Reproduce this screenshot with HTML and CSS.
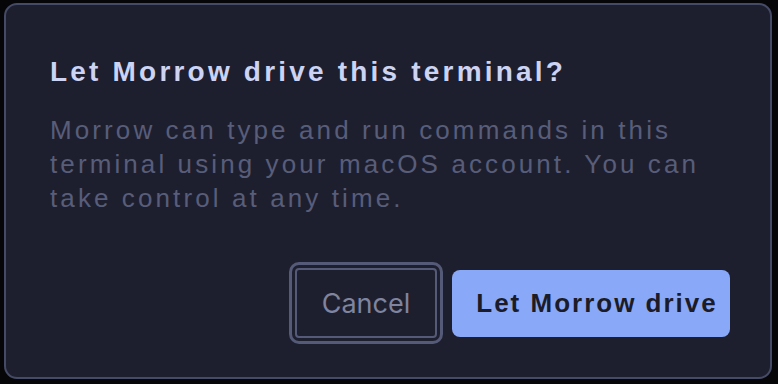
FILE: index.html
```html
<!DOCTYPE html>
<html>
<head>
<meta charset="utf-8">
<link rel="stylesheet" href="styles.css">
</head>
<body>
<div class="dialog">
  <h1 class="title">Let Morrow drive this terminal?</h1>
  <p class="message">Morrow can type and run commands in this<br>terminal using your macOS account. You can<br>take control at any time.</p>
  <div class="actions">
    <button class="btn btn-cancel">Cancel</button>
    <button class="btn btn-primary">Let Morrow drive</button>
  </div>
</div>
</body>
</html>
```
FILE: styles.css
```css
html, body {
  margin: 0;
  padding: 0;
  background: #060608;
  width: 778px;
  height: 384px;
  overflow: hidden;
}
body {
  padding: 3px 0 0 4px;
  box-sizing: border-box;
}
.dialog {
  box-sizing: border-box;
  width: 768px;
  height: 376px;
  background: #1e1f2e;
  border: 2px solid #454a66;
  border-radius: 13px;
  padding: 51px 40px 0 44px;
  font-family: "Liberation Sans", Arial, sans-serif;
}
.title {
  margin: 0;
  font-size: 28px;
  font-weight: 700;
  letter-spacing: 3.2px;
  color: #cdd3f2;
  line-height: 32px;
  white-space: nowrap;
}
.message {
  margin: 25px 0 0 0;
  font-size: 26px;
  line-height: 34px;
  letter-spacing: 3.1px;
  color: #585d7a;
  white-space: nowrap;
}
.actions {
  display: flex;
  justify-content: flex-end;
  align-items: center;
  gap: 15px;
  margin-top: 53px;
}
.btn {
  font-family: inherit;
  border-radius: 8px;
  cursor: pointer;
  padding: 0;
}
.btn-cancel {
  width: 142px;
  height: 70px;
  background: #1e1f2e;
  border: 2px solid #555a78;
  border-radius: 4px;
  color: #7f849f;
  font-family: "Inter", "Liberation Sans", sans-serif;
  font-size: 27px;
  outline: 3px solid #555a78;
  outline-offset: 3px;
}
.btn-primary {
  width: 278px;
  height: 67px;
  padding-left: 12px;
  background: #89a9f8;
  border: none;
  color: #1b1c28;
  font-size: 26px;
  font-weight: 700;
  letter-spacing: 2px;
}
```
